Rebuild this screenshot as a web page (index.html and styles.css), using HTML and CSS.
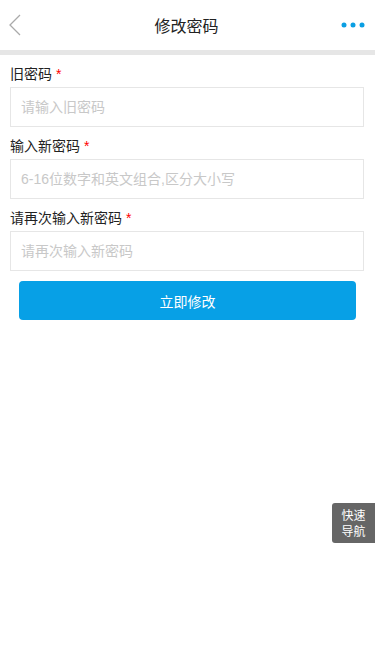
FILE: index.html
```html
<!DOCTYPE html>
<html>
<head>
  <meta charset="utf-8">
  <title>修改密码</title>
  <link rel="stylesheet" href="styles.css">
</head>
<body>
  <div class="header">
    <a class="back">
      <svg width="14" height="22" viewBox="0 0 14 22"><path d="M12 1 L2 11 L12 21" fill="none" stroke="#aaa" stroke-width="1.3"/></svg>
    </a>
    <h1>修改密码</h1>
    <a class="more">
      <svg width="24" height="6" viewBox="0 0 24 6"><circle cx="3" cy="3" r="2.5" fill="#0a9fe3"/><circle cx="12" cy="3" r="2.5" fill="#0a9fe3"/><circle cx="21" cy="3" r="2.5" fill="#0a9fe3"/></svg>
    </a>
  </div>
  <div class="divider"></div>

  <div class="form">
    <div class="group">
      <label>旧密码 <span class="req">*</span></label>
      <input type="password" placeholder="请输入旧密码">
    </div>
    <div class="group">
      <label>输入新密码 <span class="req">*</span></label>
      <input type="password" placeholder="6-16位数字和英文组合,区分大小写">
    </div>
    <div class="group">
      <label>请再次输入新密码 <span class="req">*</span></label>
      <input type="password" placeholder="请再次输入新密码">
    </div>
    <button class="submit">立即修改</button>
  </div>

  <div class="quicknav">快速<br>导航</div>
</body>
</html>
```

FILE: styles.css
```css
body {
  margin: 0;
  font-family: "Liberation Sans", "Noto Sans CJK SC", sans-serif;
  color: #333;
  background: #fff;
}

.header {
  height: 50px;
  display: flex;
  align-items: center;
  justify-content: space-between;
  padding: 0 10px 0 8px;
}

.header h1 {
  margin: 0;
  font-size: 16px;
  font-weight: normal;
  color: #222;
}

.back {
  display: flex;
  width: 26px;
}

.more {
  display: flex;
  width: 26px;
  justify-content: flex-end;
}

.divider {
  height: 5px;
  background: #e6e6e6;
}

.form {
  padding: 0 11px 0 10px;
}

.group label {
  display: block;
  padding-top: 8px;
  line-height: 22px;
  margin-bottom: 2px;
  font-size: 14px;
  color: #222;
}

.req {
  color: #f00;
}

.group input {
  display: block;
  box-sizing: border-box;
  width: 100%;
  height: 40px;
  border: 1px solid #e6e6e6;
  padding: 0 10px;
  font-size: 14px;
  font-family: inherit;
  outline: none;
}

.group input::placeholder {
  color: #c8c8c8;
}

.submit {
  display: block;
  width: calc(100% - 17px);
  margin: 10px auto 0 9px;
  height: 39px;
  border: none;
  border-radius: 4px;
  background: #07a0e6;
  color: #fff;
  font-size: 14px;
  font-family: inherit;
}

.quicknav {
  position: fixed;
  right: 0;
  top: 503px;
  width: 43px;
  height: 40px;
  box-sizing: border-box;
  padding-top: 5px;
  background: #666;
  color: #fff;
  font-size: 12px;
  line-height: 16px;
  text-align: center;
  border-radius: 3px 0 0 3px;
}
```
